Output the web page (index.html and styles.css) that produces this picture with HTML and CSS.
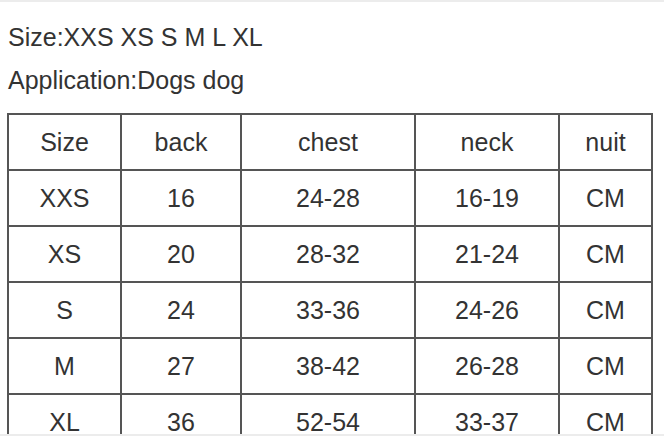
FILE: index.html
```html
<!DOCTYPE html>
<html>
<head>
<meta charset="utf-8">
<link rel="stylesheet" href="styles.css">
</head>
<body>
<div class="page">
  <p class="line">Size:XXS XS S M L XL</p>
  <p class="line">Application:Dogs dog</p>
  <div class="grid">
    <div class="cell">Size</div><div class="cell">back</div><div class="cell">chest</div><div class="cell">neck</div><div class="cell">nuit</div>
    <div class="cell">XXS</div><div class="cell">16</div><div class="cell">24-28</div><div class="cell">16-19</div><div class="cell">CM</div>
    <div class="cell">XS</div><div class="cell">20</div><div class="cell">28-32</div><div class="cell">21-24</div><div class="cell">CM</div>
    <div class="cell">S</div><div class="cell">24</div><div class="cell">33-36</div><div class="cell">24-26</div><div class="cell">CM</div>
    <div class="cell">M</div><div class="cell">27</div><div class="cell">38-42</div><div class="cell">26-28</div><div class="cell">CM</div>
    <div class="cell">XL</div><div class="cell">36</div><div class="cell">52-54</div><div class="cell">33-37</div><div class="cell">CM</div>
  </div>
</div>
</body>
</html>
```
FILE: styles.css
```css
html, body {
  margin: 0;
  padding: 0;
}
body {
  height: 436px;
  box-sizing: border-box;
  border-top: 2px solid #ececec;
  border-bottom: 2px solid #ececec;
  overflow: hidden;
  background: #fff;
  font-family: "Liberation Sans", Arial, sans-serif;
  color: #333;
}
.page {
  padding: 14px 0 0 7px;
}
.line {
  margin: 0;
  padding-left: 1px;
  font-size: 25px;
  line-height: 43px;
}
.grid {
  margin-top: 11px;
  display: grid;
  grid-template-columns: 111px 118px 172px 142px 91px;
  grid-auto-rows: 54px;
  gap: 2px;
  padding: 2px;
  width: max-content;
  background: #555;
}
.cell {
  background: #fff;
  display: flex;
  align-items: center;
  justify-content: center;
  font-size: 25px;
  color: #333;
}
```
